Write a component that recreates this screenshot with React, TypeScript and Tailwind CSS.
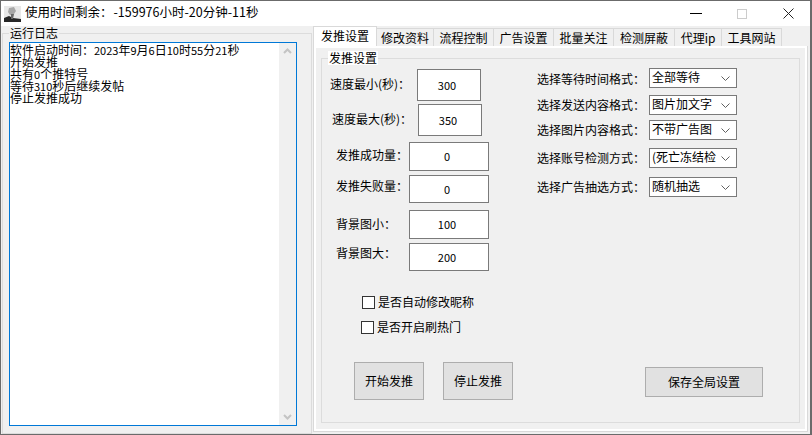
import React from 'react';

const FONT = '"Noto Sans CJK SC", "Liberation Sans", sans-serif';

const tabs = ['修改资料', '流程控制', '广告设置', '批量关注', '检测屏蔽', '代理ip', '工具网站'];
const tabWidths = ['w-[57px]', 'w-[60px]', 'w-[60px]', 'w-[60px]', 'w-[61px]', 'w-[47px]', 'w-[60px]'];

const logLines = ['软件启动时间：2023年9月6日10时55分21秒', '开始发推', '共有0个推特号', '等待310秒后继续发帖', '停止发推成功'];

// digits are narrower than the cjk glyphs in the log box
const LogLine = ({ text }: { text: string }) => (
  <div className="whitespace-nowrap">
    {text.split(/(\d+)/).map((part, i) =>
      /\d/.test(part) ? (
        <span key={i} className="text-[11px]">{part}</span>
      ) : (
        <span key={i}>{part}</span>
      ),
    )}
  </div>
);

const Field = ({ label, value, className, labelClass, boxClass }: { label: string; value: string; className: string; labelClass: string; boxClass: string }) => (
  <div className={`flex items-center ${className}`}>
    <span className={`text-[12px] leading-4 text-black whitespace-nowrap ${labelClass}`}>{label}</span>
    <div className={`flex items-center justify-center bg-white border border-[#7a7a7a] text-[11px] text-black pr-[4px] ${boxClass}`}>{value}</div>
  </div>
);

const Combo = ({ label, value, className, labelClass }: { label: string; value: string; className: string; labelClass?: string }) => (
  <div className={`flex items-center ${className}`}>
    <span className={`w-[112px] text-[12px] leading-4 text-black whitespace-nowrap ${labelClass ?? ''}`}>{label}</span>
    <div className="w-[88px] h-[20px] bg-white border border-[#7a7a7a] flex items-center justify-between pl-[2px] pr-[6px]">
      <span className="text-[12px] leading-4 text-black whitespace-nowrap pb-[2px]">{value}</span>
      <svg width="9" height="5" viewBox="0 0 9 5" fill="none" stroke="#606060" strokeWidth="1">
        <path d="M0.5 0.5 L4.5 4.5 L8.5 0.5" />
      </svg>
    </div>
  </div>
);

const Check = ({ label, className }: { label: string; className: string }) => (
  <div className={`flex items-center ${className}`}>
    <div className="w-[13px] h-[13px] bg-white border border-[#333]" />
    <span className="ml-[3px] text-[12px] leading-4 text-black">{label}</span>
  </div>
);

const Btn = ({ label, className }: { label: string; className: string }) => (
  <div className={`flex items-center justify-center bg-[#e1e1e1] border border-[#adadad] text-[12px] text-black ${className}`}>{label}</div>
);

const App: React.FC = () => {
  return (
    <div className="w-[812px] h-[435px] overflow-hidden bg-[#f0f0f0] flex flex-col border-t border-r-2 border-b border-l border-[#6b6b6b]" style={{ fontFamily: FONT }}>
      {/* title bar */}
      <div className="h-[25px] shrink-0 bg-white flex items-center pl-[3px]">
        <svg width="17" height="16" viewBox="0 0 17 16">
          <rect width="17" height="16" fill="#e8e8e8" />
          <path d="M0 16 L0 12 L5 10 L9 12 L17 13 L17 16 Z" fill="#262626" />
          <path d="M5 2 L10 1 L12 5 L10 8 L6 9 L4 6 Z" fill="#a8a8a8" />
          <path d="M7 8 L10 8 L9 13 L7 13 Z" fill="#6a6a6a" />
        </svg>
        <span className="ml-[4px] pb-[3px] text-[12.5px] leading-4 text-black whitespace-nowrap">使用时间剩余：</span>
        <span className="ml-[1px] pb-[3px] text-[12.5px] leading-4 text-black whitespace-nowrap">-159976小时-20分钟-11秒</span>
        <div className="ml-auto flex items-center">
          <div className="w-[12px] h-px bg-black mr-[35px]" />
          <div className="w-[10px] h-[10px] border border-[#cccccc] mr-[36px]" />
          <svg width="11" height="11" viewBox="0 0 11 11" stroke="#222" strokeWidth="1" className="mr-[16px]">
            <path d="M0.5 0.5 L10.5 10.5 M10.5 0.5 L0.5 10.5" />
          </svg>
        </div>
      </div>

      <div className="flex-1 flex min-h-0">
        {/* log group */}
        <div className="w-[312px] shrink-0 relative pl-[1px] pr-[1px]">
          <div className="absolute left-[1px] right-[1px] top-[7px] bottom-0 border border-[#dcdcdc]" />
          <span className="relative ml-[7px] px-px bg-[#f0f0f0] text-[12px] leading-[14px] text-black block w-fit">运行日志</span>
          <div className="relative ml-[7px] mt-[2px] w-[288px] h-[384px] bg-white border border-[#0078d7] flex">
            <div className="flex-1 pt-[1px] text-[12px] leading-[12px] text-black">
              {logLines.map((line) => (
                <LogLine key={line} text={line} />
              ))}
            </div>
            <div className="w-[17px] bg-[#f0f0f0] flex flex-col items-center justify-between py-[5px]">
              <svg width="9" height="6" viewBox="0 0 9 6" fill="none" stroke="#c4c4c4" strokeWidth="2">
                <path d="M1 5 L4.5 1.5 L8 5" />
              </svg>
              <svg width="9" height="6" viewBox="0 0 9 6" fill="none" stroke="#c4c4c4" strokeWidth="2">
                <path d="M1 1 L4.5 4.5 L8 1" />
              </svg>
            </div>
          </div>
        </div>

        {/* tab control */}
        <div className="flex-1 min-w-0 flex flex-col pr-[2px] pb-[2px]">
          <div className="h-[20px] flex items-end shrink-0 bg-[#f0f0f0]">
            <div className="w-[64px] h-[20px] bg-white border border-b-0 border-[#d9d9d9] flex items-center justify-center pb-[2px] text-[12px] text-black">发推设置</div>
            {tabs.map((t, i) => (
              <div key={t} className={`h-[18px] border-t border-r border-[#d9d9d9] flex items-center justify-center text-[12px] text-black ${tabWidths[i]}`}>{t}</div>
            ))}
          </div>
          <div className="flex-1 border border-t-0 border-[#d9d9d9] bg-white p-[2px] min-h-0">
            <div className="h-full bg-[#f0f0f0] px-[5px] pt-[3px] pb-[6px]">
              <div className="relative h-full">
                <div className="absolute inset-x-0 top-[7px] bottom-0 border border-[#dcdcdc]" />
                <span className="relative ml-[7px] px-[1px] pb-[1px] bg-white text-[12px] leading-[13px] text-black block w-fit">发推设置</span>
                <div className="relative flex">
                  {/* left fields */}
                  <div className="w-[205px] shrink-0 flex flex-col">
                    <Field label="速度最小(秒)：" value="300" className="ml-[9px] mt-[4px]" labelClass="w-[87px] pb-[2px]" boxClass="w-[64px] h-[32px]" />
                    <Field label="速度最大(秒)：" value="350" className="ml-[11px] mt-[3px]" labelClass="w-[86px] pb-[2px]" boxClass="w-[64px] h-[32px]" />
                    <Field label="发推成功量：" value="0" className="ml-[15px] mt-[6px]" labelClass="w-[73px] pb-[4px]" boxClass="w-[80px] h-[29px]" />
                    <Field label="发推失败量：" value="0" className="ml-[15px] mt-[4px]" labelClass="w-[73px] pb-[6px]" boxClass="w-[80px] h-[28px]" />
                    <Field label="背景图小：" value="100" className="ml-[15px] mt-[7px]" labelClass="w-[73px] pb-[2px]" boxClass="w-[80px] h-[29px]" />
                    <Field label="背景图大：" value="200" className="ml-[15px] mt-[4px]" labelClass="w-[73px] pb-[8px]" boxClass="w-[80px] h-[28px]" />
                  </div>
                  {/* right combos */}
                  <div className="flex flex-col">
                    <Combo label="选择等待时间格式：" value="全部等待" className="ml-[11px] mt-[3px]" labelClass="pt-[2px]" />
                    <Combo label="选择发送内容格式：" value="图片加文字" className="ml-[11px] mt-[7px]" />
                    <Combo label="选择图片内容格式：" value="不带广告图" className="ml-[11px] mt-[5px]" />
                    <Combo label="选择账号检测方式：" value="(死亡冻结检" className="ml-[11px] mt-[8px]" />
                    <Combo label="选择广告抽选方式：" value="随机抽选" className="ml-[11px] mt-[9px]" />
                  </div>
                </div>
                <Check label="是否自动修改昵称" className="relative ml-[41px] mt-[23px]" />
                <Check label="是否开启刷热门" className="relative ml-[40px] mt-[9px]" />
                <div className="relative flex items-center ml-[33px] mt-[27px]">
                  <Btn label="开始发推" className="w-[70px] h-[38px]" />
                  <Btn label="停止发推" className="w-[70px] h-[38px] ml-[19px]" />
                  <Btn label="保存全局设置" className="w-[118px] h-[30px] ml-[132px] mt-[1px]" />
                </div>
              </div>
            </div>
          </div>
        </div>
      </div>
    </div>
  );
};

export default App;
